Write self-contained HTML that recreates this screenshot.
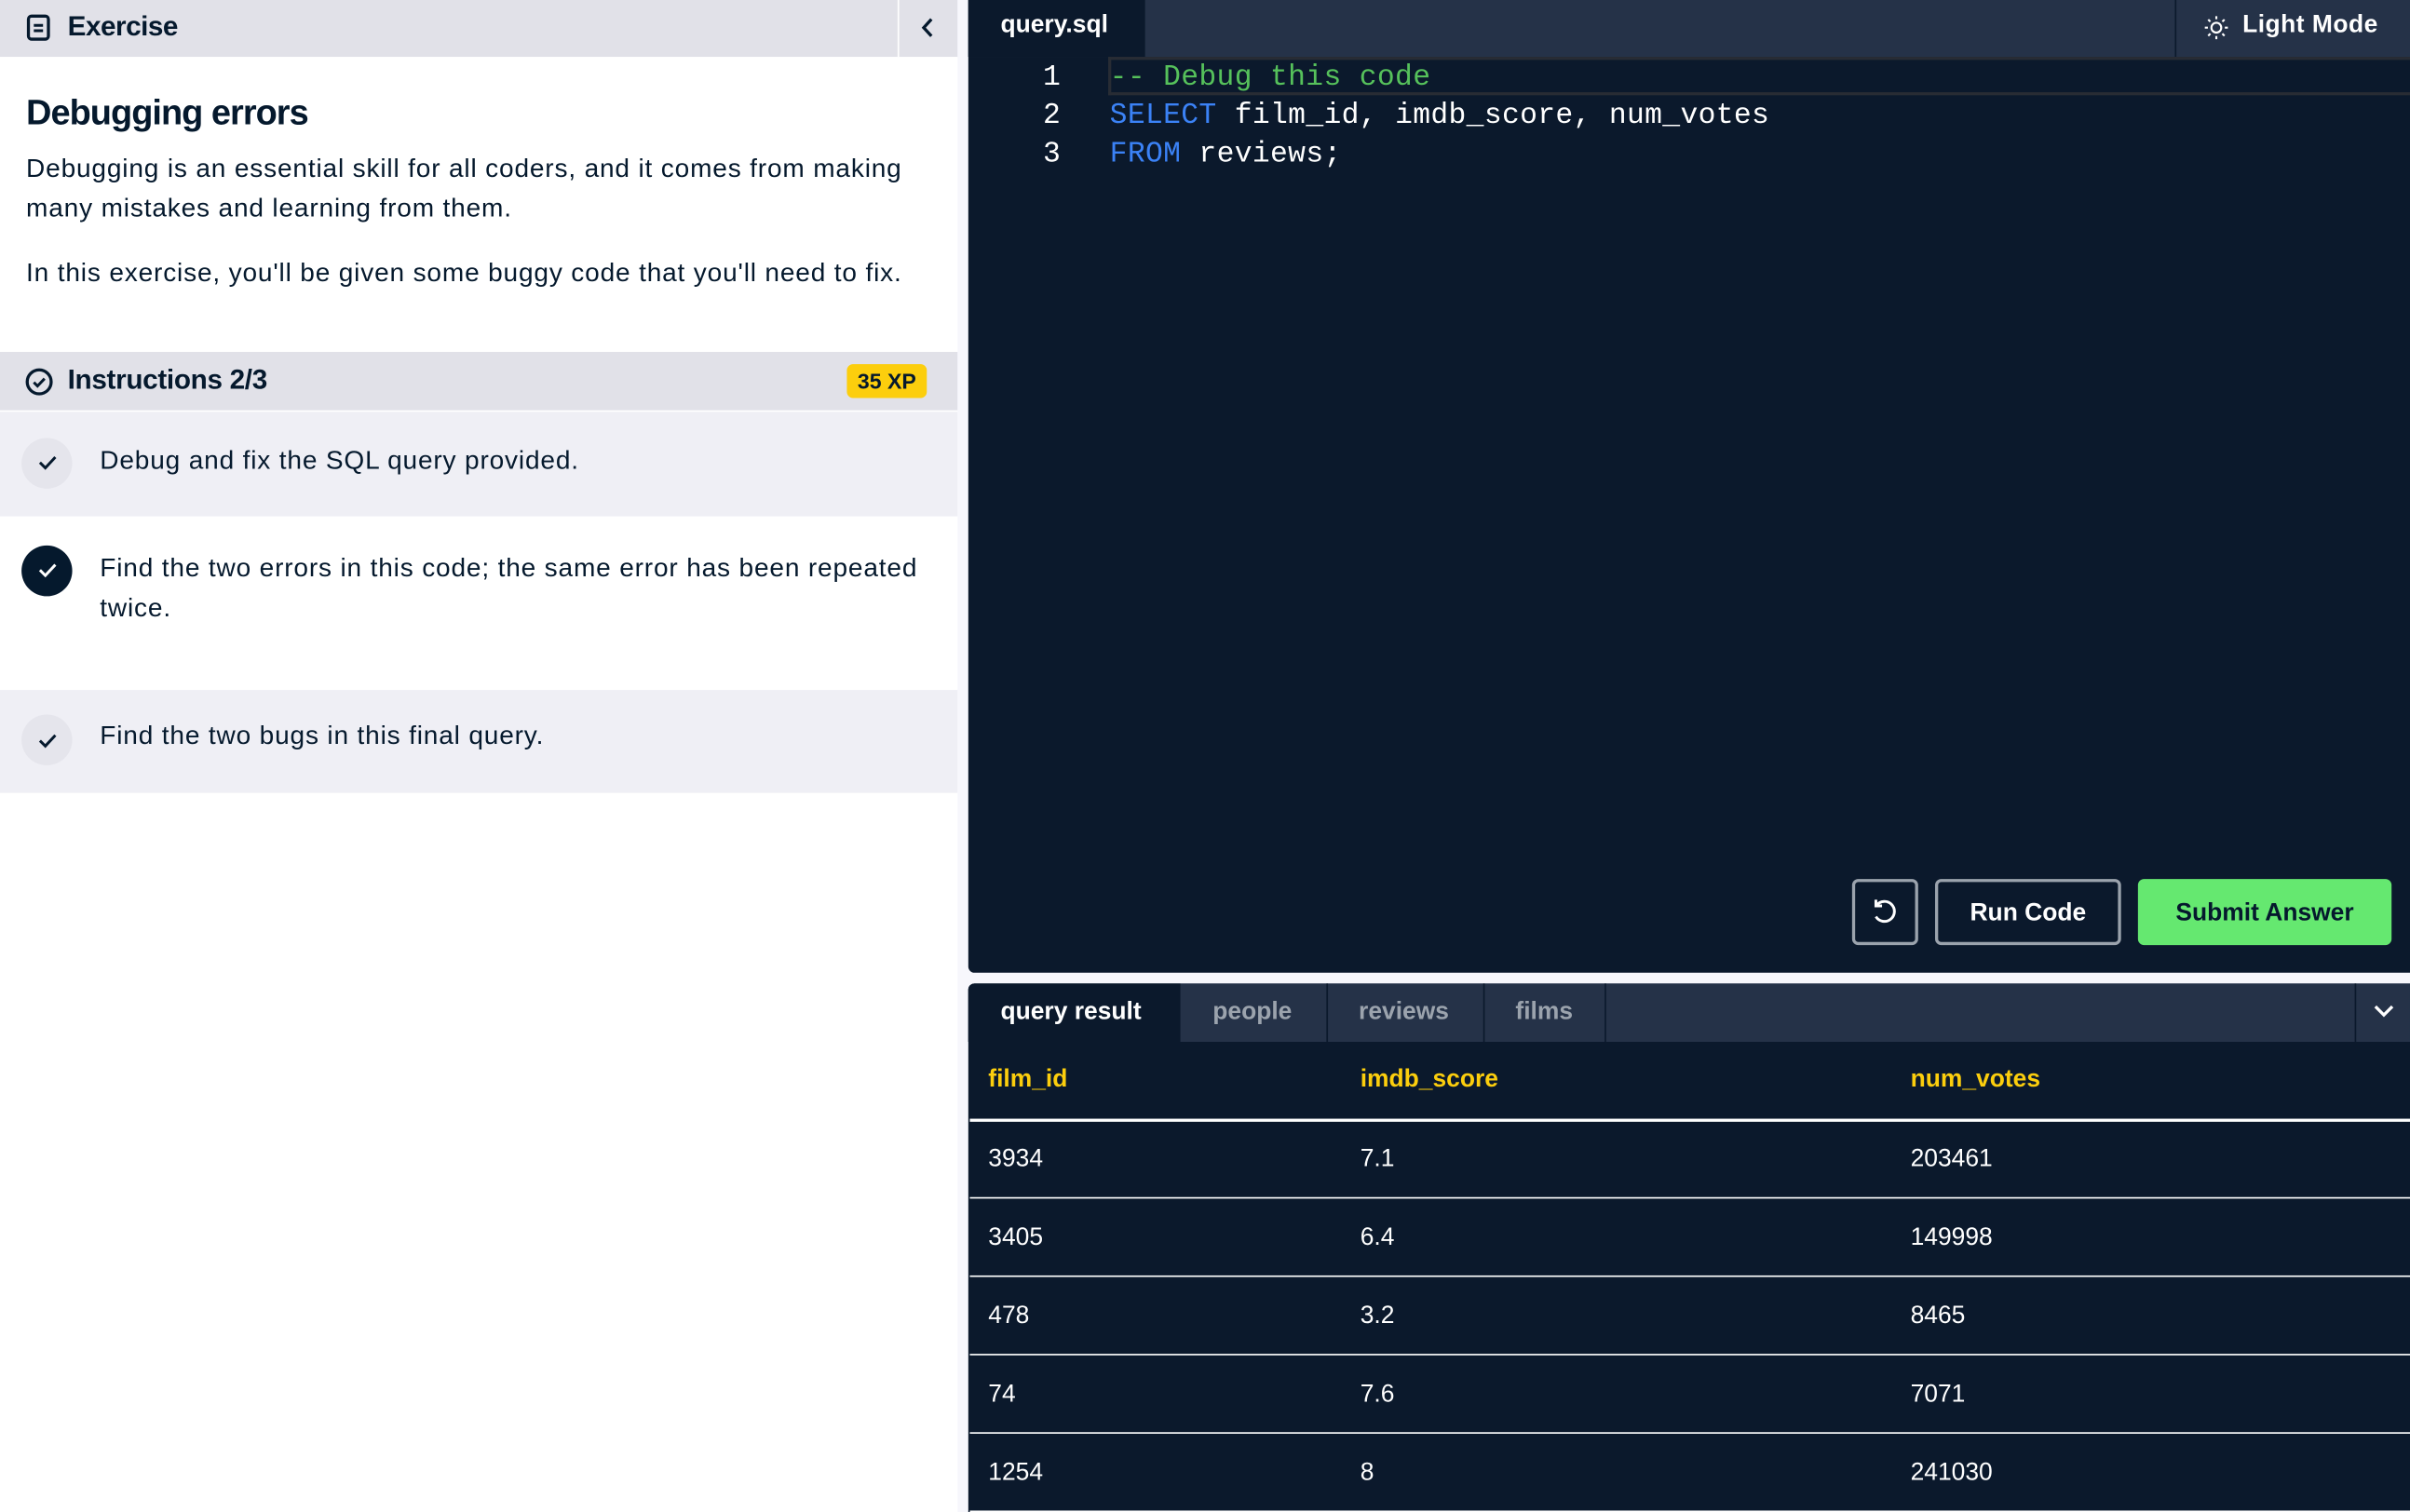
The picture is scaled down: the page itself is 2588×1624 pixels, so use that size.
<!DOCTYPE html>
<html><head><meta charset="utf-8"><style>
*{margin:0;padding:0;box-sizing:border-box}
html,body{width:2588px;height:1624px;overflow:hidden;background:#f7f7fc}
#w{position:absolute;left:0;top:0;width:1568px;height:984px;transform:scale(1.65051);transform-origin:0 0;font-family:"Liberation Sans",sans-serif;color:#05192d}
.a{position:absolute;white-space:nowrap}
.mono{font-family:"Liberation Mono",monospace}
.p{font-size:17px;letter-spacing:0.5px}
</style></head><body><div id="w">
<div class="a" style="left:0;top:0;width:623px;height:984px;background:#fff"></div>
<div class="a" style="left:0;top:0;width:623px;height:37px;background:#e1e1e8"></div>
<div class="a" style="left:584px;top:0;width:1px;height:37px;background:#fff"></div>
<svg class="a" style="left:17px;top:9px" width="16" height="18" viewBox="0 0 16 18"><rect x="1.5" y="1.5" width="13" height="15" rx="2" fill="none" stroke="#05192d" stroke-width="2"/><path d="M5 7.5h6M5 11h6" stroke="#05192d" stroke-width="1.8"/></svg>
<div class="a" style="left:44px;top:7px;font-size:18px;font-weight:bold;letter-spacing:-0.3px">Exercise</div>
<svg class="a" style="left:598px;top:11px" width="12" height="14" viewBox="0 0 12 14"><path d="M8 1.5L3 7l5 5.5" fill="none" stroke="#05192d" stroke-width="2"/></svg>
<div class="a" style="left:17px;top:60px;font-size:23px;font-weight:bold;letter-spacing:-0.6px">Debugging errors</div>
<div class="a p" style="left:17px;top:97px;line-height:26px">Debugging is an essential skill for all coders, and it comes from making<br>many mistakes and learning from them.</div>
<div class="a p" style="left:17px;top:167px;line-height:22px">In this exercise, you'll be given some buggy code that you'll need to fix.</div>
<div class="a" style="left:0;top:229px;width:623px;height:38px;background:#e1e1e8"></div>
<svg class="a" style="left:16px;top:239px" width="19" height="19" viewBox="0 0 19 19"><circle cx="9.5" cy="9.5" r="7.8" fill="none" stroke="#05192d" stroke-width="2"/><path d="M6 9.8l2.4 2.4L13 7.4" fill="none" stroke="#05192d" stroke-width="1.8"/></svg>
<div class="a" style="left:44px;top:237px;font-size:18px;font-weight:bold;letter-spacing:-0.2px">Instructions 2/3</div>
<div class="a" style="left:551px;top:237px;width:52px;height:22px;background:#fcce0d;border-radius:4px;font-size:14px;font-weight:bold;text-align:center;line-height:22px">35 XP</div>
<div class="a" style="left:0;top:268px;width:623px;height:68px;background:#efeff5"></div>
<div class="a" style="left:14px;top:285px;width:33px;height:33px;border-radius:50%;background:#e5e5ec"></div>
<svg class="a" style="left:24px;top:295px" width="14" height="12" viewBox="0 0 14 12"><path d="M2 6l3.5 3.5L12 2.5" fill="none" stroke="#05192d" stroke-width="1.8"/></svg>
<div class="a p" style="left:65px;top:290px">Debug and fix the SQL query provided.</div>
<div class="a" style="left:14px;top:355px;width:33px;height:33px;border-radius:50%;background:#05192d"></div>
<svg class="a" style="left:24px;top:365px" width="14" height="12" viewBox="0 0 14 12"><path d="M2 6l3.5 3.5L12 2.5" fill="none" stroke="#fff" stroke-width="1.8"/></svg>
<div class="a p" style="left:65px;top:357px;line-height:26px">Find the two errors in this code; the same error has been repeated<br>twice.</div>
<div class="a" style="left:0;top:449px;width:623px;height:67px;background:#efeff5"></div>
<div class="a" style="left:14px;top:465px;width:33px;height:33px;border-radius:50%;background:#e5e5ec"></div>
<svg class="a" style="left:24px;top:476px" width="14" height="12" viewBox="0 0 14 12"><path d="M2 6l3.5 3.5L12 2.5" fill="none" stroke="#05192d" stroke-width="1.8"/></svg>
<div class="a p" style="left:65px;top:469px">Find the two bugs in this final query.</div>
<div class="a" style="left:630px;top:0;width:938px;height:633px;background:#0b192c;border-bottom-left-radius:4px"></div>
<div class="a" style="left:630px;top:0;width:938px;height:37px;background:#253248"></div>
<div class="a" style="left:630px;top:0;width:115px;height:37px;background:#0b192c"></div>
<div class="a" style="left:651px;top:8px;font-size:16px;font-weight:bold;color:#fff">query.sql</div>
<div class="a" style="left:1415px;top:0;width:1px;height:37px;background:#0b192c"></div>
<svg class="a" style="left:1434px;top:10px" width="16" height="16" viewBox="0 0 16 16" fill="none" stroke="#fff" stroke-width="1.3"><circle cx="8" cy="8" r="3.2"/><path d="M8 0.5v2M8 13.5v2M0.5 8h2M13.5 8h2M2.7 2.7l1.4 1.4M11.9 11.9l1.4 1.4M2.7 13.3l1.4-1.4M11.9 4.1l1.4-1.4"/></svg>
<div class="a" style="left:1459px;top:8px;font-size:16px;font-weight:bold;color:#fff;letter-spacing:0.3px">Light Mode</div>
<div class="a" style="left:721px;top:37px;width:847px;height:25px;border:2px solid #282c34;border-right:none"></div>
<div class="a mono" style="left:672px;top:38px;font-size:19px;line-height:25px;color:#fff;text-align:right;width:18px">1<br>2<br>3</div>
<div class="a mono" style="left:722px;top:38px;font-size:19px;line-height:25px;color:#fff;letter-spacing:0.2px"><span style="color:#56c15b">-- Debug this code</span><br><span style="color:#3b82f6">SELECT</span> film_id, imdb_score, num_votes<br><span style="color:#3b82f6">FROM</span> reviews;</div>
<div class="a" style="left:1205px;top:572px;width:43px;height:43px;border:2px solid #9ba3ad;border-radius:4px"></div>
<svg class="a" style="left:1216px;top:583px" width="20" height="20" viewBox="0 0 20 20" fill="none" stroke="#fff" stroke-width="1.8"><path d="M5 6a6.5 6.5 0 1 1 -0.5 7.5"/><path d="M4.5 2.5v4h4"/></svg>
<div class="a" style="left:1259px;top:572px;width:121px;height:43px;border:2px solid #9ba3ad;border-radius:4px;color:#fff;font-size:16px;font-weight:bold;text-align:center;line-height:41px">Run Code</div>
<div class="a" style="left:1391px;top:572px;width:165px;height:43px;background:#65e870;border-radius:4px;color:#05192d;font-size:16px;font-weight:bold;text-align:center;line-height:45px">Submit Answer</div>
<div class="a" style="left:630px;top:640px;width:938px;height:344px;background:#0b192c;border-top-left-radius:4px"></div>
<div class="a" style="left:630px;top:640px;width:938px;height:38px;background:#253248;border-top-left-radius:4px"></div>
<div class="a" style="left:630px;top:640px;width:138px;height:38px;background:#0b192c;border-top-left-radius:4px"></div>
<div class="a" style="left:863px;top:640px;width:1px;height:38px;background:#0b192c"></div>
<div class="a" style="left:965px;top:640px;width:1px;height:38px;background:#0b192c"></div>
<div class="a" style="left:1044px;top:640px;width:1px;height:38px;background:#0b192c"></div>
<div class="a" style="left:1532px;top:640px;width:1px;height:38px;background:#0b192c"></div>
<div class="a" style="left:651px;top:650px;font-size:16px;font-weight:bold;color:#fff">query result</div>
<div class="a" style="left:789px;top:650px;font-size:16px;font-weight:bold;color:#9ba3ad">people</div>
<div class="a" style="left:884px;top:650px;font-size:16px;font-weight:bold;color:#9ba3ad">reviews</div>
<div class="a" style="left:986px;top:650px;font-size:16px;font-weight:bold;color:#9ba3ad">films</div>
<svg class="a" style="left:1544px;top:652px" width="14" height="12" viewBox="0 0 14 12"><path d="M1.5 3l5.5 5.5L12.5 3" fill="none" stroke="#fff" stroke-width="2"/></svg>
<div class="a" style="left:643px;top:694px;font-size:16px;font-weight:bold;color:#fcce0d">film_id</div>
<div class="a" style="left:885px;top:694px;font-size:16px;font-weight:bold;color:#fcce0d">imdb_score</div>
<div class="a" style="left:1243px;top:694px;font-size:16px;font-weight:bold;color:#fcce0d">num_votes</div>
<div class="a" style="left:631px;top:728px;width:937px;height:2px;background:#fff"></div>
<div class="a" style="left:631px;top:779px;width:937px;height:1px;background:#fff"></div>
<div class="a" style="left:631px;top:830px;width:937px;height:1px;background:#fff"></div>
<div class="a" style="left:631px;top:881px;width:937px;height:1px;background:#fff"></div>
<div class="a" style="left:631px;top:932px;width:937px;height:1px;background:#fff"></div>
<div class="a" style="left:631px;top:983px;width:937px;height:1px;background:#fff"></div>
<div class="a" style="left:643px;top:729px;font-size:16px;line-height:51px;color:#fff">3934<br>3405<br>478<br>74<br>1254</div>
<div class="a" style="left:885px;top:729px;font-size:16px;line-height:51px;color:#fff">7.1<br>6.4<br>3.2<br>7.6<br>8</div>
<div class="a" style="left:1243px;top:729px;font-size:16px;line-height:51px;color:#fff">203461<br>149998<br>8465<br>7071<br>241030</div>
</div></body></html>
